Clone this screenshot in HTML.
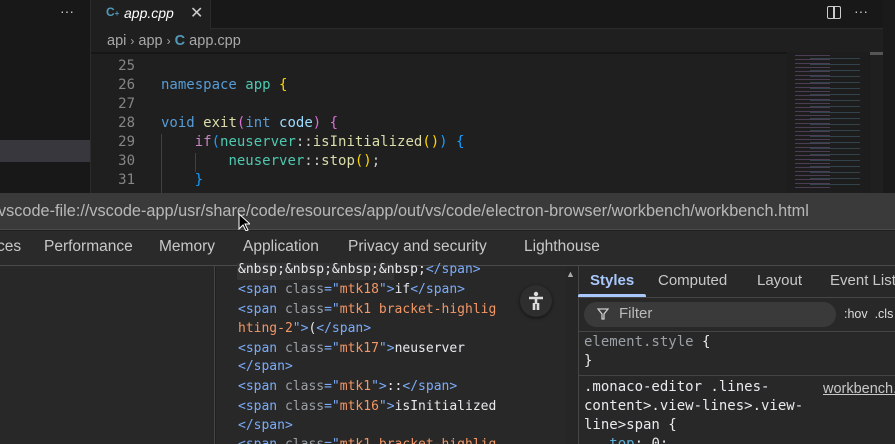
<!DOCTYPE html>
<html><head><style>
*{margin:0;padding:0;box-sizing:border-box}
html,body{width:895px;height:444px;overflow:hidden}
body{background:#202020;font-family:"Liberation Sans",sans-serif;position:relative}
.a{position:absolute}
.mono{font-family:"DejaVu Sans Mono","Liberation Mono",monospace}
.code div{position:absolute;left:0;white-space:pre;font-size:14px}
.ln{color:#858585;width:45px;text-align:right}
.kw{color:#569cd6}.ns{color:#4ec9b0}.fn{color:#dcdcaa}.y{color:#ffd700}.p{color:#da70d6}.b{color:#179fff}.ct{color:#c586c0}.w{color:#ccc}.id{color:#9cdcfe}
.dom div{position:absolute;left:238px;white-space:pre;font-size:13px;color:#e8eaed}
.t{color:#7cacf8}.v{color:#f29766}
</style></head><body>
<!-- sidebar -->
<div class="a" style="left:0;top:0;width:91px;height:193px;background:#181818"></div>
<div class="a" style="left:0;top:140px;width:91px;height:22px;background:#37373d"></div>
<div class="a" style="left:60px;top:3px;color:#ccc;font-size:14px">···</div>
<div class="a" style="left:90px;top:0;width:1px;height:193px;background:#2b2b2b"></div>
<!-- tabs -->
<div class="a" style="left:91px;top:0;width:804px;height:29px;background:#181818;border-bottom:1px solid #2b2b2b"></div>
<div class="a" style="left:91px;top:0;width:120px;height:30px;background:#1f1f1f;border-right:1px solid #2b2b2b"></div>
<div class="a" style="left:106px;top:5px;color:#519aba;font-size:12px;font-weight:bold">C<span style="font-size:8px">+</span></div>
<div class="a" style="left:124px;top:5px;color:#fff;font-size:14px;font-style:italic">app.cpp</div>
<div class="a" style="left:190px;top:3px;color:#ccc;font-size:16px">✕</div>
<div class="a" style="left:827px;top:6px;width:14px;height:13px;border:1.5px solid #ccc;border-radius:2px"></div>
<div class="a" style="left:833px;top:6px;width:1.5px;height:13px;background:#ccc"></div>
<div class="a" style="left:854px;top:3px;color:#ccc;font-size:14px">···</div>
<div class="a" style="left:91px;top:30px;width:804px;height:163px;background:#1f1f1f"></div>
<div class="a" style="left:107px;top:33px;color:#a9a9a9;font-size:14.5px">api <span style="font-size:12px">›</span> app <span style="font-size:12px">›</span> <span style="color:#519aba;font-weight:bold">C</span> app.cpp</div>
<div class="a" style="left:91px;top:52px;width:696px;height:2px;background:#161616"></div>
<!-- code -->
<div class="a code mono" style="left:90px;top:2px;width:700px;height:191px;overflow:hidden">
<div class="ln" style="top:56px">25</div>
<div class="ln" style="top:75px">26</div>
<div class="ln" style="top:94px">27</div>
<div class="ln" style="top:113px">28</div>
<div class="ln" style="top:132px">29</div>
<div class="ln" style="top:151px">30</div>
<div class="ln" style="top:170px">31</div>
<div style="left:71px;top:75px"><span class="kw">namespace</span> <span class="ns">app</span> <span class="y">{</span></div>
<div style="left:71px;top:113px"><span class="kw">void</span> <span class="fn">exit</span><span class="p">(</span><span class="kw">int</span> <span class="id">code</span><span class="p">)</span> <span class="p">{</span></div>
<div style="left:71px;top:132px">    <span class="ct">if</span><span class="b">(</span><span class="ns">neuserver</span><span class="w">::</span><span class="fn">isInitialized</span><span class="y">()</span><span class="b">)</span> <span class="b">{</span></div>
<div style="left:71px;top:151px">        <span class="ns">neuserver</span><span class="w">::</span><span class="fn">stop</span><span class="y">()</span><span class="w">;</span></div>
<div style="left:71px;top:170px">    <span class="b">}</span></div>
</div>
<div class="a" style="left:161px;top:134px;width:1px;height:59px;background:#404040"></div>
<div class="a" style="left:195px;top:153px;width:1px;height:19px;background:#404040"></div>
<!-- minimap -->
<div class="a" style="left:787px;top:52px;width:84px;height:141px;background:#1d1d1d"></div>
<div class="a" style="left:795px;top:55px;width:35px;height:135px;background:repeating-linear-gradient(#7a5a8a 0 1px,transparent 1px 4px);opacity:.5"></div>
<div class="a" style="left:810px;top:58px;width:50px;height:130px;background:repeating-linear-gradient(#5a8aa0 0 1px,transparent 1px 6px);opacity:.35"></div>
<div class="a" style="left:870px;top:52px;width:13px;height:3px;background:#555"></div>
<div class="a" style="left:883px;top:0;width:12px;height:193px;background:#1a1a1a"></div>
<!-- devtools url bar -->
<div class="a" style="left:0;top:193px;width:895px;height:37px;background:#3a3a3a;border-bottom:1px solid #4a4a4a"></div>
<div class="a" style="left:-2px;top:202px;color:#b8b8b8;font-size:16.3px;white-space:nowrap">vscode-file://vscode-app/usr/share/code/resources/app/out/vs/code/electron-browser/workbench/workbench.html</div>
<svg class="a" style="left:238px;top:213px" width="12" height="20"><path d="M1 1 L1 16 L5 12 L8 18 L10 17 L7 11 L12 11 Z" fill="#000" stroke="#fff" stroke-width="1"/></svg>
<!-- tabs row -->
<div class="a" style="left:0;top:231px;width:895px;height:35px;background:#2a2a2a;border-bottom:1px solid #4a4a4a"></div>
<div class="a" style="top:238px;left:0;color:#c8c8c8;font-size:15.5px;white-space:nowrap"><span class="a" style="left:-3px">ces</span><span class="a" style="left:44px">Performance</span><span class="a" style="left:159px">Memory</span><span class="a" style="left:243px">Application</span><span class="a" style="left:348px">Privacy and security</span><span class="a" style="left:524px">Lighthouse</span></div>
<!-- panels -->
<div class="a" style="left:0;top:266px;width:215px;height:178px;background:#282828;border-right:1px solid #454545"></div>
<div class="a" style="left:216px;top:266px;width:362px;height:178px;background:#282828"></div>
<div class="a" style="left:237px;top:263px;width:157px;height:17px;background:#333"></div>
<div class="a dom mono" style="left:0;top:0;width:578px;height:444px;overflow:hidden">
<div style="top:262px">&amp;nbsp;&amp;nbsp;&amp;nbsp;&amp;nbsp;<span class="t">&lt;/span&gt;</span></div>
<div style="top:282px"><span class="t">&lt;span </span><span style="color:#9aa0a6">class</span><span class="t">="</span><span class="v">mtk18</span><span class="t">"&gt;</span>if<span class="t">&lt;/span&gt;</span></div>
<div style="top:302px"><span class="t">&lt;span </span><span style="color:#9aa0a6">class</span><span class="t">="</span><span class="v">mtk1 bracket-highlig</span></div>
<div style="top:321px"><span class="v">hting-2</span><span class="t">"&gt;</span>(<span class="t">&lt;/span&gt;</span></div>
<div style="top:341px"><span class="t">&lt;span </span><span style="color:#9aa0a6">class</span><span class="t">="</span><span class="v">mtk17</span><span class="t">"&gt;</span>neuserver</div>
<div style="top:359px"><span class="t">&lt;/span&gt;</span></div>
<div style="top:379px"><span class="t">&lt;span </span><span style="color:#9aa0a6">class</span><span class="t">="</span><span class="v">mtk1</span><span class="t">"&gt;</span>::<span class="t">&lt;/span&gt;</span></div>
<div style="top:399px"><span class="t">&lt;span </span><span style="color:#9aa0a6">class</span><span class="t">="</span><span class="v">mtk16</span><span class="t">"&gt;</span>isInitialized</div>
<div style="top:418px"><span class="t">&lt;/span&gt;</span></div>
<div style="top:437px"><span class="t">&lt;span </span><span style="color:#9aa0a6">class</span><span class="t">="</span><span class="v">mtk1 bracket-highlig</span></div>
</div>
<div class="a" style="left:520px;top:285px;width:32px;height:32px;border-radius:50%;background:#2e2e2e;box-shadow:0 1px 3px #111"></div>
<svg class="a" style="left:527px;top:291px" width="18" height="20"><circle cx="9" cy="3" r="2.2" fill="#ddd"/><path d="M2 7 H16 M9 7 V13 M7 12 V19 M11 12 V19" stroke="#ddd" stroke-width="2.6" fill="none"/></svg>
<div class="a" style="left:566px;top:266px;width:12px;height:178px;background:#262626"></div>
<div class="a" style="left:566px;top:269px;color:#aaa;font-size:9px">▲</div>
<!-- styles pane -->
<div class="a" style="left:578px;top:266px;width:317px;height:178px;background:#282828;border-left:1px solid #454545"></div>
<div class="a" style="left:578px;top:297px;width:317px;height:1px;background:#454545"></div>
<div class="a" style="left:578px;top:272px;color:#c8c8c8;font-size:15px;white-space:nowrap"><span class="a" style="left:12px;color:#a8c7fa;font-weight:bold">Styles</span><span class="a" style="left:80px">Computed</span><span class="a" style="left:179px">Layout</span><span class="a" style="left:252px">Event Listeners</span></div>
<div class="a" style="left:578px;top:294px;width:68px;height:3px;background:#a8c7fa;border-radius:2px 2px 0 0"></div>
<div class="a" style="left:584px;top:302px;width:252px;height:25px;background:#3a3a3a;border-radius:13px"></div>
<svg class="a" style="left:597px;top:308px" width="12" height="12"><path d="M1 1 H11 L7 6 V11 H5 V6 Z" fill="none" stroke="#ccc" stroke-width="1.3"/></svg>
<div class="a" style="left:619px;top:305px;color:#bbb;font-size:15px">Filter</div>
<div class="a" style="left:844px;top:307px;color:#ddd;font-size:12.5px;white-space:nowrap">:hov&nbsp;&nbsp;.cls</div>
<div class="a" style="left:578px;top:331px;width:317px;height:1px;background:#454545"></div>
<div class="a mono" style="left:584px;top:333px;font-size:14px;color:#9aa0a6;line-height:19px">element.style <span style="color:#e8eaed">{</span><br><span style="color:#e8eaed">}</span></div>
<div class="a" style="left:578px;top:375px;width:317px;height:1px;background:#454545"></div>
<div class="a mono" style="left:584px;top:378px;font-size:14px;color:#e8eaed;line-height:19px;white-space:pre">.monaco-editor .lines-
content&gt;.view-lines&gt;.view-
line&gt;span {
   <span style="color:#5db0d7">top</span>: 0;</div>
<div class="a" style="left:823px;top:381px;font-size:14.5px;color:#c8c8c8;text-decoration:underline;white-space:nowrap">workbench.</div>
</body></html>
